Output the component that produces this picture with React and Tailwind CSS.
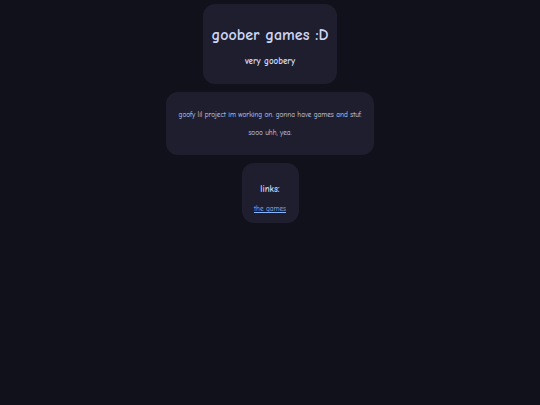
export default function App() {
  return (
    <div
      className="min-h-[405px] w-full bg-[#11111b] text-[#cdd6f4] flex flex-col items-center gap-2 pt-1"
      style={{ fontFamily: '"Comic Sans MS", "Comic Neue", "Comic Relief", cursive' }}
    >
      <div className="bg-[#1e1e2e] rounded-xl w-[134px] h-[80px] flex flex-col items-center justify-center">
        <h1 className="text-[16px] font-bold leading-none mt-1">goober games :D</h1>
        <p className="text-[9px] font-bold mt-[14px] leading-none">very goobery</p>
      </div>
      <div className="bg-[#1e1e2e] rounded-xl w-[208px] h-[63px] flex flex-col items-center justify-center gap-[10px] text-[7.2px] leading-none pt-[2px]">
        <p>goofy lil project im working on. gonna have games and stuf.</p>
        <p>sooo uhh, yea.</p>
      </div>
      <div className="bg-[#1e1e2e] rounded-xl w-[57px] h-[60px] flex flex-col items-center pt-[22px]">
        <h2 className="text-[9px] font-bold leading-none">links:</h2>
        <a href="#" className="text-[7.2px] leading-none mt-[12px] text-[#89b4fa] underline">the games</a>
      </div>
    </div>
  );
}
